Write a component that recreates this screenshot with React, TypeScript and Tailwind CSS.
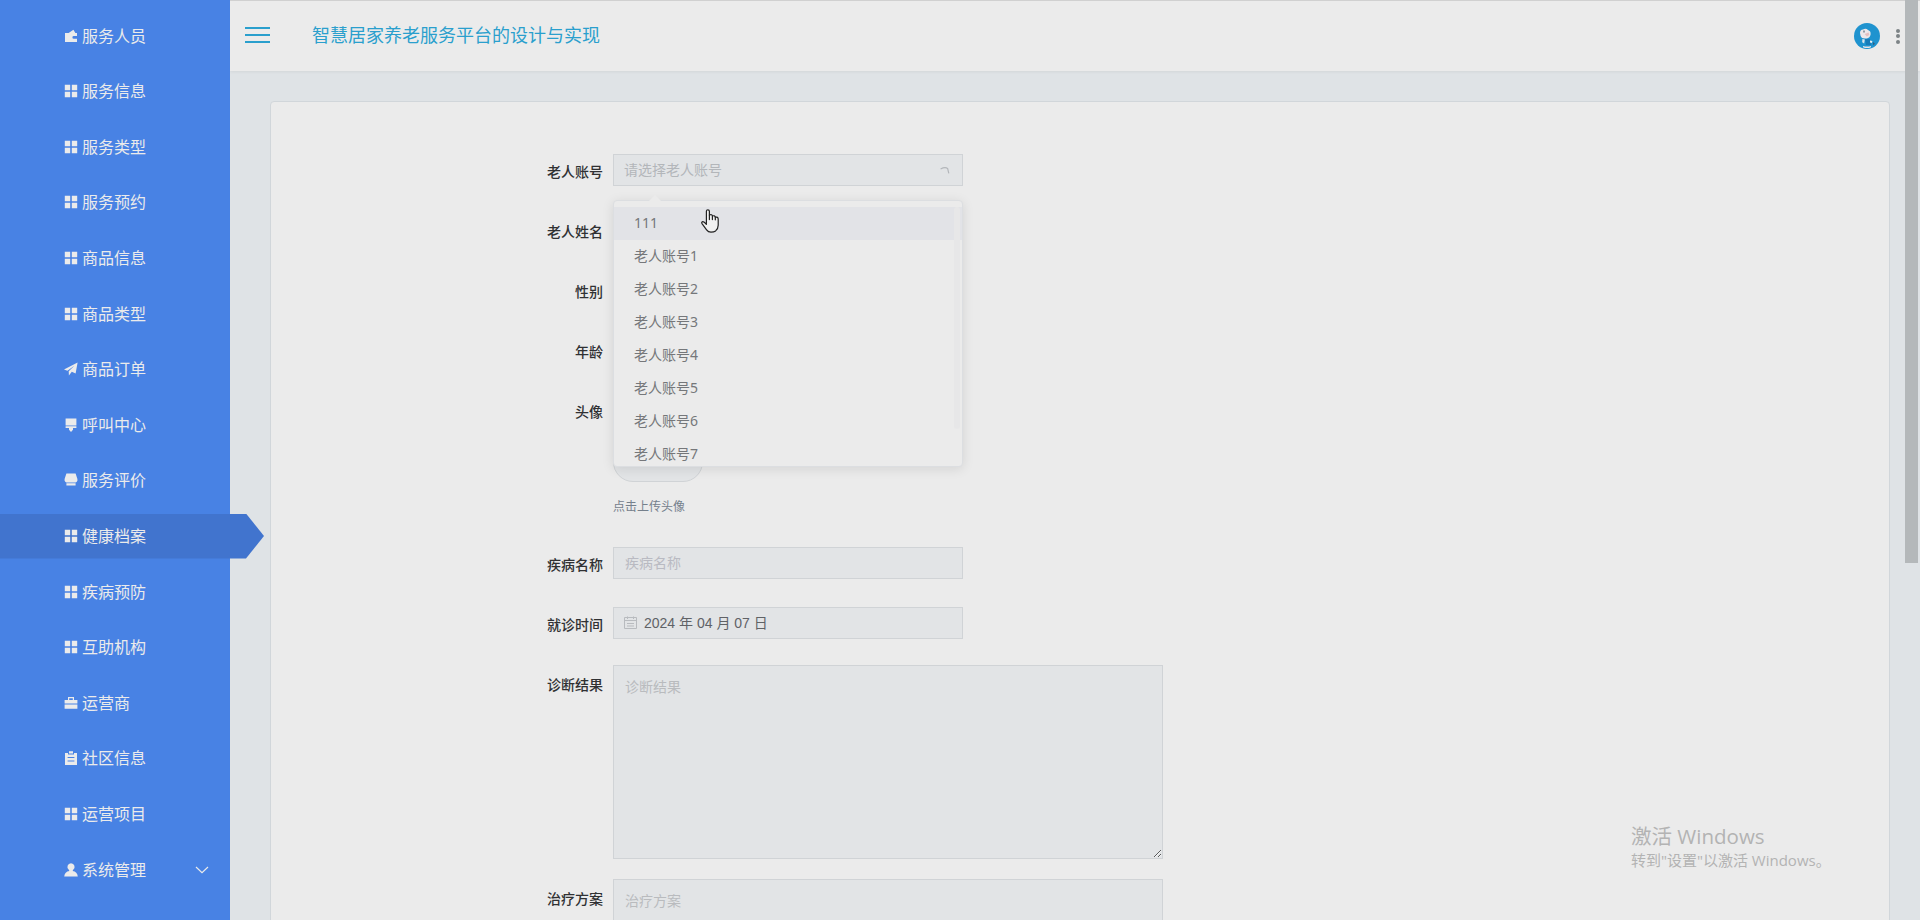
import React, { useState } from "react";
import { clsx } from "clsx";

type IconName =
    | "wallet"
    | "menu"
    | "promotion"
    | "brush"
    | "shop"
    | "cooperation"
    | "order"
    | "user";

interface MenuItem {
    label: string;
    icon: IconName;
    expandable?: boolean;
}

const MENU: MenuItem[] = [
    { label: "服务人员", icon: "wallet" },
    { label: "服务信息", icon: "menu" },
    { label: "服务类型", icon: "menu" },
    { label: "服务预约", icon: "menu" },
    { label: "商品信息", icon: "menu" },
    { label: "商品类型", icon: "menu" },
    { label: "商品订单", icon: "promotion" },
    { label: "呼叫中心", icon: "brush" },
    { label: "服务评价", icon: "shop" },
    { label: "健康档案", icon: "menu" },
    { label: "疾病预防", icon: "menu" },
    { label: "互助机构", icon: "menu" },
    { label: "运营商", icon: "cooperation" },
    { label: "社区信息", icon: "order" },
    { label: "运营项目", icon: "menu" },
    { label: "系统管理", icon: "user", expandable: true },
];

const ACCOUNTS = [
    "111",
    "老人账号1",
    "老人账号2",
    "老人账号3",
    "老人账号4",
    "老人账号5",
    "老人账号6",
    "老人账号7",
];

const ICON_PATHS: Record<IconName, string> = {
    wallet: "M1 4h3.6L9.4.8l2 3.2H13v3H9.8a1.4 1.4 0 0 0 0 2.8H13V13H1z",
    menu: "M.8.8h5.4v5.4H.8zM7.8.8h5.4v5.4H7.8zM.8 7.8h5.4v5.4H.8zM7.8 7.8h5.4v5.4H7.8z",
    promotion: "M0 7.4 13.6.4 11.6 11.4 7.8 9.8 4.9 13.4 4.7 9.2 10.4 3.8 3.4 8.8z",
    brush: "M1.6.4h10.8v7H1.6zM1.6 8.2h10.8v1.8H9V11.8L7 14 5 11.8V10H1.6z",
    shop: "M2.4.6h9.2L13.4 6v1.8q-.8 1.6-1.8 1.6H2.4Q1.4 9.4.6 7.8V6zM2.4 10.2h9.2v2.4H2.4z",
    cooperation:
        "M4 1h6v3h3.4v3.4H.6V4H4zM5.2 2.2V4h3.6V2.2zM.6 8.4h12.8v4.4H.6z",
    order: "M1 2h3v1.6h6V2h3v12H1zM5 .2h4v2.4H5zM3.6 6v1h6.8V6zM3.6 9.4v1h6.8v-1z",
    user: "M7 .2a3.7 3.7 0 0 1 2.2 6.6L8.6 8Q13.2 8.6 13.8 13.6H.2Q.8 8.6 5.4 8L4.8 6.8A3.7 3.7 0 0 1 7 .2z",
};

export default function App() {
    const [active, setActive] = useState("健康档案");

    return (
        <div className="relative flex h-[920px] w-full overflow-hidden bg-[#dfe3e6] font-['Noto_Sans','Noto_Sans_CJK_SC',sans-serif]">
            <Sidebar active={active} onSelect={setActive} />

            <div className="flex min-w-0 flex-1 flex-col">
                <Header />
                <main className="min-h-0 flex-1 pl-10 pr-[30px] pt-[30px]">
                    <HealthForm />
                </main>
            </div>

            <div className="absolute inset-x-0 top-0 h-px bg-[#d0d0d0]" />
            <div className="absolute left-0 top-0 h-px w-[230px] bg-[#a9cdf3]" />
            <div className="absolute right-[2px] top-0 h-[563px] w-[13px] bg-[#b4b8ba]" />
            <div className="absolute left-[1631px] top-[822px] font-['Open_Sans','Noto_Sans_CJK_SC',sans-serif] text-[#b3b3b3]">
                <p className="whitespace-nowrap text-[20.5px] leading-[28px]">激活 Windows</p>
                <p className="whitespace-nowrap text-[15px] leading-[20px]">
                    转到"设置"以激活 Windows。
                </p>
            </div>
        </div>
    );
}

function Sidebar({
    active,
    onSelect,
}: {
    active: string;
    onSelect: (label: string) => void;
}) {
    return (
        <nav className="z-10 flex w-[230px] shrink-0 flex-col gap-[10.6px] bg-[#4882e4] pt-[13.2px]">
            {MENU.map((item) => (
                <button
                    key={item.label}
                    type="button"
                    onClick={() => onSelect(item.label)}
                    className={clsx(
                        "flex h-[45px] shrink-0 items-center pl-16 text-left text-base text-[#ebebeb]",
                        item.label === active
                            ? "w-[264px] bg-[#4174ce] [clip-path:polygon(0_0,246px_0,100%_50%,246px_100%,0_100%)]"
                            : "w-full",
                    )}
                >
                    <svg
                        viewBox="0 0 14 14"
                        className="mr-1 h-3.5 w-3.5 shrink-0"
                        fill="currentColor"
                        fillRule="evenodd"
                    >
                        <path d={ICON_PATHS[item.icon]} />
                    </svg>
                    {item.label}
                    {item.expandable && (
                        <svg
                            viewBox="0 0 14 8"
                            className="ml-auto mr-[21px] h-2 w-3.5"
                            fill="none"
                            stroke="currentColor"
                            strokeWidth="1.2"
                        >
                            <path d="M1 1l6 5.6L13 1" />
                        </svg>
                    )}
                </button>
            ))}
        </nav>
    );
}

function Header() {
    return (
        <header className="flex h-[71px] shrink-0 items-center bg-[#ebebeb] pb-px pl-[15px] pr-5 shadow-[0_1px_3px_rgba(0,0,0,0.06)]">
            <button
                type="button"
                aria-label="Menu"
                className="flex w-[25px] flex-col gap-[5px]"
            >
                <span className="h-0.5 bg-[#2a9fcd]" />
                <span className="h-0.5 bg-[#2a9fcd]" />
                <span className="h-0.5 bg-[#2a9fcd]" />
            </button>
            <h1 className="ml-[42px] text-lg text-[#2a9fcd]">
                智慧居家养老服务平台的设计与实现
            </h1>
            <Avatar />
            <div className="ml-4 mt-0.5 flex flex-col gap-[1.5px]">
                <span className="h-1 w-1 rounded-full bg-[#7d8386]" />
                <span className="h-1 w-1 rounded-full bg-[#7d8386]" />
                <span className="h-1 w-1 rounded-full bg-[#7d8386]" />
            </div>
        </header>
    );
}

function Avatar() {
    return (
        <svg viewBox="0 0 26 26" className="ml-auto mt-0.5 h-[26px] w-[26px]">
            <circle cx="13" cy="13" r="13" fill="#1f93cf" />
            <path
                d="M6 10Q6 6.6 9 6.4q3-1.4 5 .6 3 1 2.6 4.4-.6 3.4-4 4-5 .6-6-2.4z"
                fill="#ece7ea"
            />
            <path d="M9.4 7.4h1.2v2H9.4z" fill="#596b78" />
            <path d="M10.6 11l4-1.4.8 2.4-2.6 1.6z" fill="#e3bfc0" />
            <path d="M8.4 16l2.4.6-.6 4-2-1.4z" fill="#dce6ec" />
            <path d="M11 16h5l1 6h-5z" fill="#187bb8" />
            <path d="M16 17.4l2.4.6-.6 2-1.8-.6z" fill="#e9eef0" />
            <path d="M19 19l2 1.8-2 1.4z" fill="#345e80" />
            <path d="M9 23q4 1 8 0v1.2q-4 1.8-8 0z" fill="#ece3e5" />
        </svg>
    );
}

function HealthForm() {
    return (
        <section className="h-[900px] rounded-sm border border-[#d1d6da] bg-[#ebebeb] pl-[242px] pt-[52px]">
            <Field label="老人账号">
                <div className="relative w-[350px]">
                    <div className="flex h-8 items-center justify-between border border-[#d0d3d6] bg-[#e2e4e6] pl-2.5 pr-3 text-sm text-[#b3b6ba]">
                        <span>请选择老人账号</span>
                        <svg
                            viewBox="0 0 10 8"
                            className="h-2 w-2.5"
                            fill="none"
                            stroke="currentColor"
                            strokeWidth="1.2"
                        >
                            <path d="M.6 3Q5 .6 7.6 2.4L8.8 7.4" />
                        </svg>
                    </div>
                    <AccountMenu />
                </div>
            </Field>
            <Field label="老人姓名" />
            <Field label="性别" />
            <Field label="年龄" />
            <Field label="头像" className="h-[153px]">
                <div>
                    <div className="h-[88px] w-[90px] rounded-[20px] border border-[#d0d3d6] bg-[#e2e4e6]" />
                    <p className="mt-[17px] text-xs leading-4 text-[#75808c]">点击上传头像</p>
                </div>
            </Field>
            <Field label="疾病名称">
                <input
                    placeholder="疾病名称"
                    className="h-8 w-[350px] border border-[#d0d3d6] bg-[#e2e4e6] px-[11px] pb-0.5 text-sm outline-none placeholder:text-[#b9bac2]"
                />
            </Field>
            <Field label="就诊时间" className="h-[58px]">
                <div className="flex h-8 w-[350px] items-center border border-[#d0d3d6] bg-[#e2e4e6] pl-2.5 font-['Liberation_Sans','Noto_Sans_CJK_SC',sans-serif] text-sm text-[#606266]">
                    <CalendarIcon />
                    2024 年 04 月 07 日
                </div>
            </Field>
            <Field label="诊断结果" className="h-[214px]" tall>
                <TextBox placeholder="诊断结果" />
            </Field>
            <Field label="治疗方案" className="h-[214px]" tall>
                <TextBox placeholder="治疗方案" />
            </Field>
        </section>
    );
}

function Field({
    label,
    className = "h-[60px]",
    tall = false,
    children,
}: {
    label: string;
    className?: string;
    tall?: boolean;
    children?: React.ReactNode;
}) {
    return (
        <div className={clsx("flex items-start", className)}>
            <label
                className={clsx(
                    "mr-2.5 w-[90px] shrink-0 text-right text-sm font-medium text-[#303133]",
                    tall ? "leading-[39px]" : "leading-[35px]",
                )}
            >
                {label}
            </label>
            {children}
        </div>
    );
}

function TextBox({ placeholder }: { placeholder: string }) {
    return (
        <textarea
            placeholder={placeholder}
            className="h-[194px] w-[550px] resize border border-[#d0d3d6] bg-[#e2e4e6] px-[11px] py-2.5 text-sm leading-[21px] outline-none placeholder:text-[#b9bbbe]"
        />
    );
}

function AccountMenu() {
    return (
        <div className="absolute left-0 top-[46px] z-20 h-[267px] w-[350px] rounded border border-[#dcdee1] bg-[#ebebeb] shadow-[0_2px_12px_rgba(0,0,0,0.1)]">
            <div className="absolute -top-[6px] left-[35px] border-x-[6px] border-b-[6px] border-x-transparent border-b-[#ebebeb]" />
            <ul className="h-full overflow-hidden pt-1.5">
                {ACCOUNTS.map((name, index) => (
                    <li
                        key={name}
                        className={clsx(
                            "h-[33px] pl-5 text-sm leading-[31px] text-[#75777a]",
                            index === 0 && "bg-[#e2e3e7]",
                        )}
                    >
                        {name}
                    </li>
                ))}
            </ul>
            <div className="absolute right-[2px] top-1.5 h-[222px] w-1.5 rounded bg-[#e7e7e8]" />
            <svg
                viewBox="0 0 18 24"
                className="absolute left-[87px] top-[8px] h-6 w-[18px]"
                fill="#f1f1f1"
                stroke="#222"
                strokeWidth="1.2"
                strokeLinejoin="round"
                strokeLinecap="round"
            >
                <path d="M5.4 14.5V2.3Q5.4.8 6.9.8T8.4 2.3V6q2.6-1 3 1 2.4-.8 2.9 1.2 2.9-.6 2.9 1.9v6.2q0 3.4-2.6 5.6-1.7 1.2-4.6 1.2-2.8 0-4.4-2.3L1 14.6q-.8-1.6.8-2 1.2-.2 3.6 2.8" />
                <path d="M8.4 6v4.6M11.4 7v3.6M14.3 8.2v2.6" fill="none" />
            </svg>
        </div>
    );
}

function CalendarIcon() {
    return (
        <svg
            viewBox="0 0 14 14"
            className="mr-1.5 h-3.5 w-3.5"
            fill="none"
            stroke="#b8bbbf"
            strokeWidth="1"
        >
            <path d="M.5 1.5h12v11H.5zM.5 4.5h12M3.5.5V3M9.5.5V3M3 7.5h7M3 10h7" />
        </svg>
    );
}
